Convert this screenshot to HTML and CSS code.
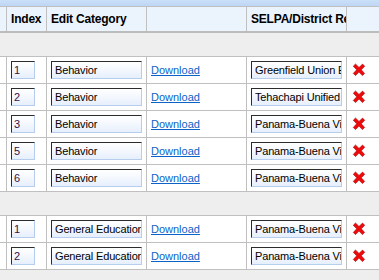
FILE: index.html
```html
<!DOCTYPE html>
<html>
<head>
<meta charset="utf-8">
<link rel="stylesheet" href="styles.css">
</head>
<body>
<div class="grid">
  <div class="row topbar"></div>
  <div class="row head">
    <div class="cell"></div>
    <div class="cell">Index</div>
    <div class="cell">Edit Category</div>
    <div class="cell"></div>
    <div class="cell">SELPA/District Representative</div>
    <div class="cell last"></div>
  </div>
  <div class="row group"></div>

  <div class="row data">
    <div class="cell"></div>
    <div class="cell"><input class="idx" value="1"></div>
    <div class="cell"><input class="txt" value="Behavior"></div>
    <div class="cell"><a href="#">Download</a></div>
    <div class="cell"><input class="txt" value="Greenfield Union Elementary"></div>
    <div class="cell last"><svg class="del" viewBox="0 0 14 14"><path d="M1.3 3.2 L3.5 1 L7 4.4 L10.6 1.1 L12.7 3.3 L9.3 6.8 L12.6 10.4 L10.4 12.6 L7 9.1 L3.5 12.6 L1.3 10.4 L4.7 6.8 Z"/></svg></div>
  </div>
  <div class="row data">
    <div class="cell"></div>
    <div class="cell"><input class="idx" value="2"></div>
    <div class="cell"><input class="txt" value="Behavior"></div>
    <div class="cell"><a href="#">Download</a></div>
    <div class="cell"><input class="txt" value="Tehachapi Unified"></div>
    <div class="cell last"><svg class="del" viewBox="0 0 14 14"><path d="M1.3 3.2 L3.5 1 L7 4.4 L10.6 1.1 L12.7 3.3 L9.3 6.8 L12.6 10.4 L10.4 12.6 L7 9.1 L3.5 12.6 L1.3 10.4 L4.7 6.8 Z"/></svg></div>
  </div>
  <div class="row data">
    <div class="cell"></div>
    <div class="cell"><input class="idx" value="3"></div>
    <div class="cell"><input class="txt" value="Behavior"></div>
    <div class="cell"><a href="#">Download</a></div>
    <div class="cell"><input class="txt" value="Panama-Buena Vista"></div>
    <div class="cell last"><svg class="del" viewBox="0 0 14 14"><path d="M1.3 3.2 L3.5 1 L7 4.4 L10.6 1.1 L12.7 3.3 L9.3 6.8 L12.6 10.4 L10.4 12.6 L7 9.1 L3.5 12.6 L1.3 10.4 L4.7 6.8 Z"/></svg></div>
  </div>
  <div class="row data">
    <div class="cell"></div>
    <div class="cell"><input class="idx" value="5"></div>
    <div class="cell"><input class="txt" value="Behavior"></div>
    <div class="cell"><a href="#">Download</a></div>
    <div class="cell"><input class="txt" value="Panama-Buena Vista"></div>
    <div class="cell last"><svg class="del" viewBox="0 0 14 14"><path d="M1.3 3.2 L3.5 1 L7 4.4 L10.6 1.1 L12.7 3.3 L9.3 6.8 L12.6 10.4 L10.4 12.6 L7 9.1 L3.5 12.6 L1.3 10.4 L4.7 6.8 Z"/></svg></div>
  </div>
  <div class="row data">
    <div class="cell"></div>
    <div class="cell"><input class="idx" value="6"></div>
    <div class="cell"><input class="txt" value="Behavior"></div>
    <div class="cell"><a href="#">Download</a></div>
    <div class="cell"><input class="txt" value="Panama-Buena Vista"></div>
    <div class="cell last"><svg class="del" viewBox="0 0 14 14"><path d="M1.3 3.2 L3.5 1 L7 4.4 L10.6 1.1 L12.7 3.3 L9.3 6.8 L12.6 10.4 L10.4 12.6 L7 9.1 L3.5 12.6 L1.3 10.4 L4.7 6.8 Z"/></svg></div>
  </div>

  <div class="row group"></div>

  <div class="row data">
    <div class="cell"></div>
    <div class="cell"><input class="idx" value="1"></div>
    <div class="cell"><input class="txt" value="General Education"></div>
    <div class="cell"><a href="#">Download</a></div>
    <div class="cell"><input class="txt" value="Panama-Buena Vista"></div>
    <div class="cell last"><svg class="del" viewBox="0 0 14 14"><path d="M1.3 3.2 L3.5 1 L7 4.4 L10.6 1.1 L12.7 3.3 L9.3 6.8 L12.6 10.4 L10.4 12.6 L7 9.1 L3.5 12.6 L1.3 10.4 L4.7 6.8 Z"/></svg></div>
  </div>
  <div class="row data">
    <div class="cell"></div>
    <div class="cell"><input class="idx" value="2"></div>
    <div class="cell"><input class="txt" value="General Education"></div>
    <div class="cell"><a href="#">Download</a></div>
    <div class="cell"><input class="txt" value="Panama-Buena Vista"></div>
    <div class="cell last"><svg class="del" viewBox="0 0 14 14"><path d="M1.3 3.2 L3.5 1 L7 4.4 L10.6 1.1 L12.7 3.3 L9.3 6.8 L12.6 10.4 L10.4 12.6 L7 9.1 L3.5 12.6 L1.3 10.4 L4.7 6.8 Z"/></svg></div>
  </div>
  <div class="row filler"></div>
</div>
</body>
</html>
```

FILE: styles.css
```css
html, body {
  margin: 0;
  padding: 0;
  background: #eeeeee;
  overflow: hidden;
}

.grid {
  width: 400px;
  font-family: "Liberation Sans", Arial, sans-serif;
  font-size: 11px;
  color: #000;
}

.row {
  display: grid;
  grid-template-columns: 7px 40px 100px 100px 100px 53px;
  box-sizing: border-box;
}

.topbar {
  display: block;
  height: 7px;
  background: linear-gradient(#cadff8, #bed6f4);
  border-bottom: 1px solid #c0c0c0;
}

.head {
  height: 26px;
  background: #ebf3fd;
  border-bottom: 2px solid #bcbcbc;
}

.head .cell {
  font-weight: bold;
  font-size: 12px;
  letter-spacing: -0.2px;
  line-height: 24px;
  padding-left: 4px;
  white-space: nowrap;
  overflow: hidden;
}

.head .cell:first-child {
  padding-left: 0;
}

.group {
  display: block;
  height: 24px;
  background: #eeeeee;
  border-bottom: 1px solid #c0c0c0;
}

.data {
  height: 27px;
  background: #fff;
  border-bottom: 1px solid #c0c0c0;
}

.cell {
  box-sizing: border-box;
  border-right: 1px solid #c0c0c0;
  min-width: 0;
}

.cell.last {
  border-right: none;
}

.data .cell {
  display: flex;
  align-items: center;
  padding-left: 4px;
}

.data .cell:first-child {
  padding-left: 0;
}

input {
  box-sizing: border-box;
  height: 18px;
  margin: 0;
  padding: 0 0 0 3px;
  font-family: "Liberation Sans", Arial, sans-serif;
  font-size: 11px;
  letter-spacing: -0.15px;
  color: #000;
  border-style: solid;
  border-width: 1px;
  border-color: #2c2c2c #b6cdee #b6cdee #2c2c2c;
  background: linear-gradient(#ffffff, #f1f6fe 60%, #e6effd);
  outline: none;
}

input.idx {
  width: 24px;
  padding-left: 2px;
  color: #3a1040;
}

input.txt {
  width: 91px;
}

a {
  color: #0b63c7;
  text-decoration: underline;
}

.del {
  width: 14px;
  height: 14px;
  margin-left: 1px;
  margin-top: -1px;
}

.del path {
  fill: #ee0a0a;
  stroke: #a40000;
  stroke-width: 0.6;
  stroke-linejoin: round;
}

.filler {
  display: block;
  height: 20px;
  background: #eeeeee;
}
```
